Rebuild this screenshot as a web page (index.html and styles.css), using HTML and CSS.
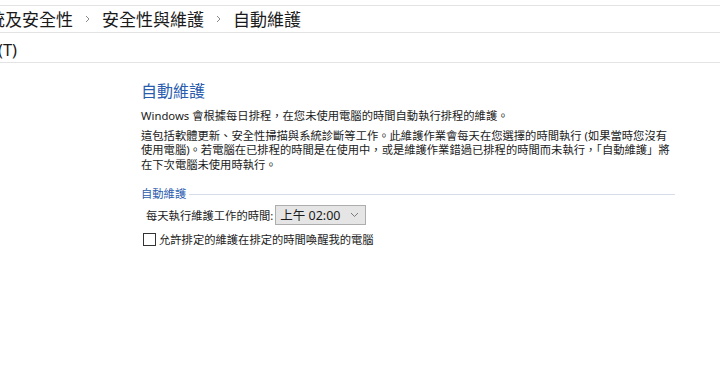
FILE: index.html
```html
<!DOCTYPE html>
<html lang="zh-Hant">
<head>
    <meta charset="UTF-8">
    <title>自動維護</title>
    <link rel="stylesheet" href="styles.css">
</head>
<body>
    <div class="top-gap"></div>
    <div class="crumbs">
        <span class="crumb first">系統及安全性</span>
        <svg class="chev" width="5" height="8" viewBox="0 0 5 8"><path d="M1 1l3 3-3 3" fill="none" stroke="#8a8a8a" stroke-width="1"/></svg>
        <span class="crumb">安全性與維護</span>
        <svg class="chev" width="5" height="8" viewBox="0 0 5 8"><path d="M1 1l3 3-3 3" fill="none" stroke="#8a8a8a" stroke-width="1"/></svg>
        <span class="crumb">自動維護</span>
    </div>
    <div class="menubar">
        <span class="menu-item">(T)</span>
    </div>

    <div class="content">
        <h1 class="title">自動維護</h1>
        <p class="intro">Windows 會根據每日排程，在您未使用電腦的時間自動執行排程的維護。</p>
        <p class="desc">這包括軟體更新、安全性掃描與系統診斷等工作。此維護作業會每天在您選擇的時間執行 (如果當時您沒有<br>使用電腦)。若電腦在已排程的時間是在使用中，或是維護作業錯過已排程的時間而未執行，「自動維護」將<br>在下次電腦未使用時執行。</p>

        <div class="group-head">
            <span class="group-label">自動維護</span>
            <span class="group-line"></span>
        </div>
        <div class="time-row">
            <span class="time-label">每天執行維護工作的時間:</span>
            <div class="select">
                <span>上午 02:00</span>
                <svg width="9" height="6" viewBox="0 0 9 6"><path d="M1 1l3.5 3.5L8 1" fill="none" stroke="#7a7a7a" stroke-width="1"/></svg>
            </div>
        </div>
        <label class="check-row">
            <span class="checkbox"></span>
            <span>允許排定的維護在排定的時間喚醒我的電腦</span>
        </label>
    </div>
</body>
</html>
```

FILE: styles.css
```css
body {
    margin: 0;
    background-color: #fff;
    font-family: "Noto Sans", "Noto Sans CJK TC", sans-serif;
    color: #1b1b1b;
    overflow: hidden;
}
.top-gap {
    height: 5px;
    border-bottom: 1px solid #e3e3e3;
}
.crumbs {
    height: 26px;
    display: flex;
    align-items: center;
    gap: 10px;
    margin-left: -29px;
    border-bottom: 1px solid #e3e3e3;
    font-family: "Noto Sans CJK TC", sans-serif;
    font-size: 17px;
    color: #1a1a1a;
    white-space: nowrap;
}
.crumb {
    margin-top: -2px;
}
.chev {
    margin: 0 2px;
}
.menubar {
    height: 29px;
    display: flex;
    align-items: center;
    border-bottom: 1px solid #e3e3e3;
    font-size: 16.5px;
}
.menu-item {
    margin-left: -2px;
    padding-top: 4px;
}
.content {
    width: 534px;
    padding-left: 141px;
    font-size: 11.3px;
}
.title {
    margin: 17px 0 0;
    font-family: "Noto Sans CJK TC", sans-serif;
    font-size: 16px;
    font-weight: normal;
    line-height: 20px;
    color: #2a5cae;
}
.intro {
    margin: 9px 0 0;
    line-height: 14.5px;
    white-space: nowrap;
}
.desc {
    margin: 5px 0 0;
    line-height: 14.5px;
    white-space: nowrap;
}
.group-head {
    display: flex;
    align-items: center;
    gap: 3px;
    margin-top: 15px;
    line-height: 14px;
}
.group-label {
    color: #2a5cae;
}
.group-line {
    flex: 1;
    height: 1px;
    background-color: #d6dde8;
}
.time-row {
    display: flex;
    align-items: center;
    margin-top: 4px;
    padding-left: 5px;
}
.time-label {
    margin-right: 2px;
}
.select {
    width: 79px;
    height: 18px;
    display: flex;
    align-items: center;
    justify-content: space-between;
    padding: 0 6px 0 4px;
    border: 1px solid #adadad;
    background-color: #e5e5e5;
    font-size: 12.5px;
}
.select span {
    margin-top: -1px;
}
.check-row {
    display: flex;
    align-items: center;
    gap: 3px;
    margin-top: 6px;
    padding-left: 2px;
}
.checkbox {
    width: 11px;
    height: 11px;
    border: 1px solid #333;
    background-color: #fff;
}
```
